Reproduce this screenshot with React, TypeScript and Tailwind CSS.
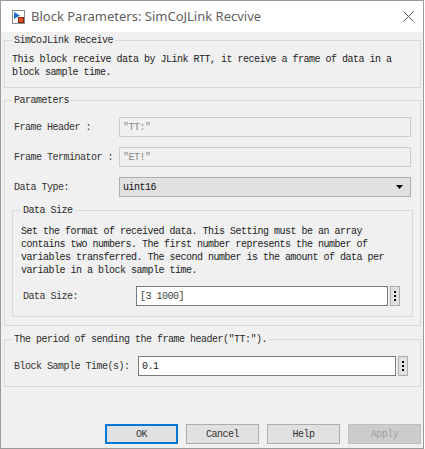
import React from "react";

const mono = "font-['Liberation_Mono',monospace] text-[10px] tracking-[-0.5px] leading-[13px]";

const BlockIcon = () => (
  <svg width="13" height="14" viewBox="0 0 13 14">
    <rect x="0.5" y="0.5" width="12" height="13" fill="#ffffff" stroke="#8a8a8a" />
    <polygon points="2,2 8,5.5 2,9" fill="#1f6fd0" />
    <rect x="6.5" y="7.5" width="5" height="5" fill="#e5501c" stroke="#7a2a10" />
  </svg>
);

const Dots = () => (
  <div className="ml-[2px] flex h-[20px] w-[10px] flex-col items-center justify-center gap-[2px] border border-[#adadad] bg-[#e1e1e1]">
    <span className="h-[2px] w-[2px] bg-black" />
    <span className="h-[2px] w-[2px] bg-black" />
    <span className="h-[2px] w-[2px] bg-black" />
  </div>
);

const Legend = ({ children }: { children: React.ReactNode }) => (
  <legend className={`${mono} px-[2px] text-[#2a2a2a]`}>{children}</legend>
);

const DisabledRow = ({ label, value, first }: { label: string; value: string; first?: boolean }) => (
  <div className={`flex items-center pl-[2px] pr-[2px] ${first ? "" : "mt-[10px]"}`}>
    <div className={`${mono} w-[105px] text-[#333]`}>{label}</div>
    <div className={`${mono} flex h-[20px] flex-1 items-center border border-[#cccccc] bg-[#f0f0f0] px-[3px] text-[#8a8a8a]`}>
      {value}
    </div>
  </div>
);

const Btn = ({ label, kind }: { label: string; kind?: "ok" | "off" }) => {
  const look =
    kind === "ok"
      ? "border-2 border-[#0078d7] bg-[#e1e1e1] text-[#333]"
      : kind === "off"
      ? "border border-[#bfbfbf] bg-[#cccccc] text-[#a0a0a0]"
      : "border border-[#adadad] bg-[#e1e1e1] text-[#333]";
  return (
    <div className={`${mono} flex h-[20px] w-[73px] items-center justify-center ${look}`}>{label}</div>
  );
};

export default function App() {
  return (
    <div className="h-[449px] w-[425px] bg-white">
      <div className="flex h-[449px] w-[424px] flex-col border border-[#9b9b9b] bg-[#f0f0f0]">
        {/* Title bar */}
        <div className="flex h-[31px] items-center bg-white pl-[11px] pr-[9px]">
          <BlockIcon />
          <span className="ml-[6px] font-['Noto_Sans',sans-serif] text-[13px] text-[#606060]">
            Block Parameters: SimCoJLink Recvive
          </span>
          <svg className="ml-auto" width="11" height="11" viewBox="0 0 11 11">
            <path d="M0.5 0.5 L10.5 10.5 M10.5 0.5 L0.5 10.5" stroke="#555" strokeWidth="1" />
          </svg>
        </div>

        {/* Description */}
        <fieldset className="ml-[3px] mr-[2px] mt-[2px] border border-[#d9d9d9] px-[7px] pb-[8px] pt-[6px]">
          <Legend>SimCoJLink Receive</Legend>
          <p className={`${mono} text-[#222]`}>
            This block receive data by JLink RTT, it receive a frame of data in a
            <br />
            block sample time.
          </p>
        </fieldset>

        {/* Parameters */}
        <fieldset className="ml-[3px] mr-[2px] mt-[6px] border border-[#d9d9d9] px-[7px] pb-[8px] pt-[10px]">
          <Legend>Parameters</Legend>
          <DisabledRow first label="Frame Header :" value={'"TT:"'} />
          <DisabledRow label="Frame Terminator :" value={'"ET!"'} />
          <div className="mt-[10px] flex items-center pl-[2px] pr-[2px]">
            <div className={`${mono} w-[105px] text-[#333]`}>Data Type:</div>
            <div className={`${mono} flex h-[20px] flex-1 items-center border border-[#adadad] bg-[#e1e1e1] pl-[3px] pr-[7px] text-[#111]`}>
              uint16
              <svg className="ml-auto" width="7" height="4" viewBox="0 0 7 4">
                <polygon points="0,0 7,0 3.5,4" fill="#000" />
              </svg>
            </div>
          </div>

          <fieldset className="mt-[7px] border border-[#d9d9d9] pb-[10px] pl-[8px] pr-[4px] pt-[8px]">
            <Legend>Data Size</Legend>
            <p className={`${mono} text-[#222]`}>
              Set the format of received data. This Setting must be an array
              <br />
              contains two numbers. The first number represents the number of
              <br />
              variables transferred. The second number is the amount of data per
              <br />
              variable in a block sample time.
            </p>
            <div className="mt-[9px] flex items-center pl-[2px] pr-[8px]">
              <div className={`${mono} w-[113px] text-[#333]`}>Data Size:</div>
              <div className={`${mono} flex h-[20px] flex-1 items-center border border-[#7a7a7a] bg-white px-[3px] text-[#444]`}>
                [3 1000]
              </div>
              <Dots />
            </div>
          </fieldset>
        </fieldset>

        {/* Sample time */}
        <fieldset className="ml-[3px] mr-[2px] mt-[7px] border border-[#d9d9d9] px-[7px] pb-[10px] pt-[10px]">
          <Legend>The period of sending the frame header("TT:").</Legend>
          <div className="flex items-center pl-[2px] pr-[5px]">
            <div className={`${mono} w-[124px] text-[#333]`}>Block Sample Time(s):</div>
            <div className={`${mono} flex h-[20px] flex-1 items-center border border-[#7a7a7a] bg-white px-[3px] text-[#222]`}>
              0.1
            </div>
            <Dots />
          </div>
        </fieldset>

        {/* Buttons */}
        <div className="mt-auto flex justify-end gap-[8px] pb-[4px] pr-[2px]">
          <Btn label="OK" kind="ok" />
          <Btn label="Cancel" />
          <Btn label="Help" />
          <Btn label="Apply" kind="off" />
        </div>
      </div>
    </div>
  );
}
